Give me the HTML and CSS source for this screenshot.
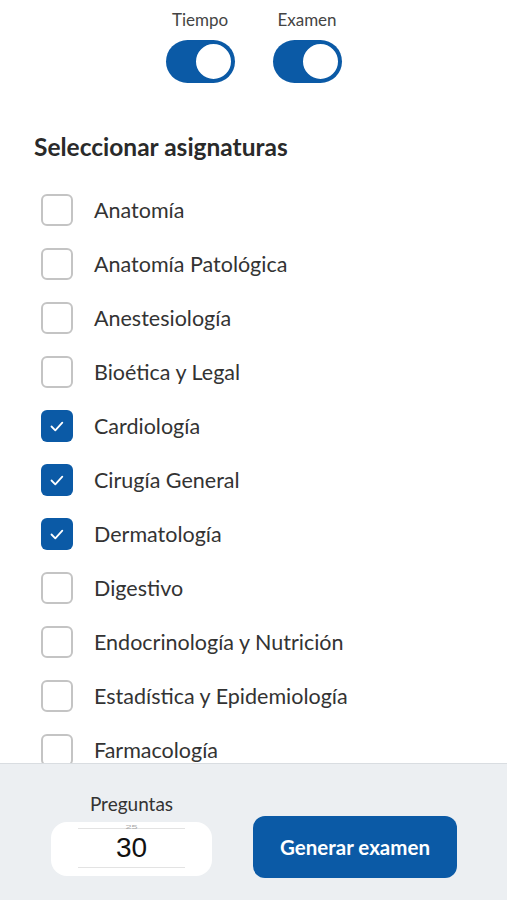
FILE: index.html
```html
<!DOCTYPE html>
<html lang="es">
<head>
  <meta charset="UTF-8">
  <meta name="viewport" content="width=device-width, initial-scale=1.0">
  <title>Generar examen</title>
  <link rel="stylesheet" href="styles.css">
</head>
<body>
  <div class="page">

    <!-- opciones y asignaturas -->
    <div class="content">
      <div class="toggles">
        <div class="toggle-item">
          <span class="toggle-label">Tiempo</span>
          <span class="switch on"><span class="thumb"></span></span>
        </div>
        <div class="toggle-item">
          <span class="toggle-label">Examen</span>
          <span class="switch on"><span class="thumb"></span></span>
        </div>
      </div>

      <h2 class="section-title">Seleccionar asignaturas</h2>

      <ul class="subjects">
        <li class="subject"><span class="check"></span>Anatomía</li>
        <li class="subject"><span class="check"></span>Anatomía Patológica</li>
        <li class="subject"><span class="check"></span>Anestesiología</li>
        <li class="subject"><span class="check"></span>Bioética y Legal</li>
        <li class="subject">
          <span class="check checked">
            <svg viewBox="0 0 32 32" width="32" height="32"><path d="M10.5 16.5l3.8 3.8 7-7.6" fill="none" stroke="#fff" stroke-width="1.8" stroke-linecap="round" stroke-linejoin="round"/></svg>
          </span>Cardiología
        </li>
        <li class="subject">
          <span class="check checked">
            <svg viewBox="0 0 32 32" width="32" height="32"><path d="M10.5 16.5l3.8 3.8 7-7.6" fill="none" stroke="#fff" stroke-width="1.8" stroke-linecap="round" stroke-linejoin="round"/></svg>
          </span>Cirugía General
        </li>
        <li class="subject">
          <span class="check checked">
            <svg viewBox="0 0 32 32" width="32" height="32"><path d="M10.5 16.5l3.8 3.8 7-7.6" fill="none" stroke="#fff" stroke-width="1.8" stroke-linecap="round" stroke-linejoin="round"/></svg>
          </span>Dermatología
        </li>
        <li class="subject"><span class="check"></span>Digestivo</li>
        <li class="subject"><span class="check"></span>Endocrinología y Nutrición</li>
        <li class="subject"><span class="check"></span>Estadística y Epidemiología</li>
        <li class="subject"><span class="check"></span>Farmacología</li>
      </ul>
    </div>

    <!-- barra inferior -->
    <div class="footer">
      <div class="count">
        <span class="count-label">Preguntas</span>
        <div class="picker">
          <span class="picker-prev">25</span>
          <span class="picker-current">30</span>
        </div>
      </div>
      <button class="generate">Generar examen</button>
    </div>

  </div>
</body>
</html>
```

FILE: styles.css
```css
body {
  margin: 0;
  font-family: Lato, "Open Sans", sans-serif;
  background-color: #fff;
  color: #2f2f2f;
}

.page {
  height: 900px;
  display: flex;
  flex-direction: column;
}

.content {
  flex: 1;
  overflow: hidden;
  padding: 10px 0 0 34px;
}

/* interruptores */
.toggles {
  display: flex;
  justify-content: center;
  gap: 38px;
  margin-left: -34px;
}

.toggle-item {
  display: flex;
  flex-direction: column;
  align-items: center;
  gap: 10px;
}

.toggle-label {
  font-size: 17px;
  line-height: 20px;
  color: #444;
}

.switch {
  display: flex;
  justify-content: flex-end;
  align-items: center;
  width: 69px;
  height: 43px;
  padding: 2px;
  box-sizing: border-box;
  border-radius: 22px;
  background-color: #0b5aa6;
}

.thumb {
  width: 39px;
  height: 39px;
  box-sizing: border-box;
  border-radius: 50%;
  background-color: #fff;
  border: 2px solid #0b5aa6;
}

.section-title {
  margin: 50px 0 22px;
  font-size: 24.5px;
  line-height: 28px;
  font-weight: 700;
  color: #2a2a2a;
}

/* asignaturas */
.subjects {
  list-style: none;
  margin: 0;
  padding: 0;
}

.subject {
  display: flex;
  align-items: center;
  height: 54px;
  font-size: 21.5px;
  color: #333;
}

.check {
  width: 32px;
  height: 32px;
  box-sizing: border-box;
  margin: 0 21px 0 7px;
  border: 2px solid #c4c4c4;
  border-radius: 6px;
  flex-shrink: 0;
}

.check.checked {
  border: none;
  background-color: #0b5aa6;
}

.check svg {
  display: block;
}

/* pie */
.footer {
  height: 137px;
  box-sizing: border-box;
  border-top: 1px solid #d9dde1;
  background-color: #eceff2;
  display: flex;
  align-items: flex-end;
  padding: 0 0 22px 51px;
  gap: 41px;
}

.count {
  width: 161px;
  display: flex;
  flex-direction: column;
  align-items: center;
  gap: 6px;
  margin-bottom: 2px;
}

.count-label {
  font-size: 19px;
  line-height: 24px;
  color: #333;
}

.picker {
  width: 161px;
  height: 54px;
  border-radius: 16px;
  background-color: #fff;
  display: flex;
  flex-direction: column;
  align-items: center;
  overflow: hidden;
}

.picker-prev {
  height: 11px;
  margin-bottom: -5px;
  font-family: "Liberation Sans", Arial, sans-serif;
  font-size: 11px;
  line-height: 11px;
  color: #aaa;
  transform: scaleY(0.45);
}

.picker-current {
  width: 107px;
  height: 40px;
  box-sizing: border-box;
  border-top: 1px solid #e3e3e3;
  border-bottom: 1px solid #e3e3e3;
  text-align: center;
  font-family: "Liberation Sans", Arial, sans-serif;
  font-size: 28px;
  line-height: 38px;
  color: #111;
}

.generate {
  width: 204px;
  height: 62px;
  border: none;
  border-radius: 12px;
  background-color: #0b5aa6;
  color: #fff;
  font-family: Lato, "Open Sans", sans-serif;
  font-size: 20.5px;
  font-weight: 700;
  cursor: pointer;
}
```
